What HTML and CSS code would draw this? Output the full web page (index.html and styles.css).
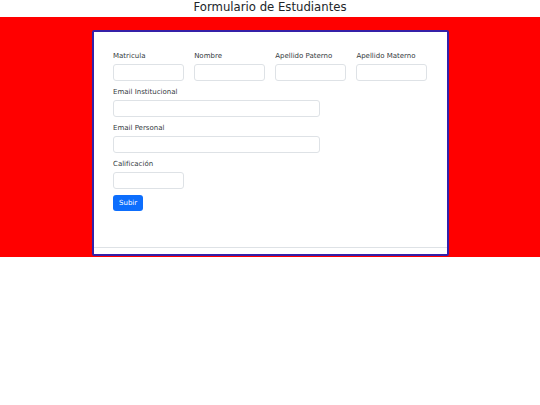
FILE: index.html
```html
<!DOCTYPE html>
<html lang="es">
<head>
  <meta charset="UTF-8" />
  <meta name="viewport" content="width=device-width, initial-scale=1.0"/>
  <title>Formulario de Estudiantes</title>
  <link rel="stylesheet" href="styles.css">
</head>
<body>
  <h1 class="titulo">Formulario de Estudiantes</h1>

  <div class="fondo">
    <div class="card">
      <form class="card-body">
        <div class="fila">
          <div class="campo">
            <label for="matricula">Matricula</label>
            <input type="text" id="matricula" />
          </div>
          <div class="campo">
            <label for="nombre">Nombre</label>
            <input type="text" id="nombre" />
          </div>
          <div class="campo">
            <label for="paterno">Apellido Paterno</label>
            <input type="text" id="paterno" />
          </div>
          <div class="campo">
            <label for="materno">Apellido Materno</label>
            <input type="text" id="materno" />
          </div>
        </div>

        <div class="campo">
          <label for="emailInst">Email Institucional</label>
          <input type="email" id="emailInst" class="ancho" />
        </div>

        <div class="campo">
          <label for="emailPers">Email Personal</label>
          <input type="email" id="emailPers" class="ancho" />
        </div>

        <div class="campo">
          <label for="calificacion">Calificación</label>
          <input type="text" id="calificacion" class="corto" />
        </div>

        <button type="submit" class="btn">Subir</button>
      </form>
      <div class="card-footer"></div>
    </div>
  </div>
</body>
</html>
```

FILE: styles.css
```css
body {
  margin: 0;
  font-family: "DejaVu Sans", sans-serif;
  color: #212529;
  background: #fff;
}
.titulo {
  margin: 0;
  height: 17px;
  line-height: 14px;
  font-size: 11.7px;
  font-weight: normal;
  text-align: center;
}
.fondo {
  background: #ff0000;
  padding: 13px 0 1px;
}
.card {
  width: 357px;
  margin: 0 auto;
  box-sizing: border-box;
  background: #fff;
  border: 2px solid #3520a8;
  border-radius: 2px;
}
.card-body {
  padding: 19px 19.5px 36px;
}
.card-footer {
  height: 6px;
  border-top: 1px solid #dee2e6;
}
.fila {
  display: grid;
  grid-template-columns: repeat(4, 1fr);
  column-gap: 10.5px;
}
.campo {
  margin-bottom: 6px;
}
.campo label {
  display: block;
  font-size: 7px;
  line-height: 10px;
  margin-bottom: 3px;
  color: #343a40;
}
.campo input {
  display: block;
  box-sizing: border-box;
  width: 100%;
  height: 17px;
  margin: 0;
  border: 1px solid #dee2e6;
  border-radius: 3px;
  background: #fff;
}
.campo input.ancho {
  width: 66%;
}
.campo input.corto {
  width: calc((100% - 31.5px) / 4);
}
.btn {
  display: block;
  height: 16px;
  padding: 0 6px;
  font-family: "DejaVu Sans", sans-serif;
  font-size: 7px;
  color: #fff;
  background: #0d6efd;
  border: none;
  border-radius: 3px;
  cursor: pointer;
}
```
